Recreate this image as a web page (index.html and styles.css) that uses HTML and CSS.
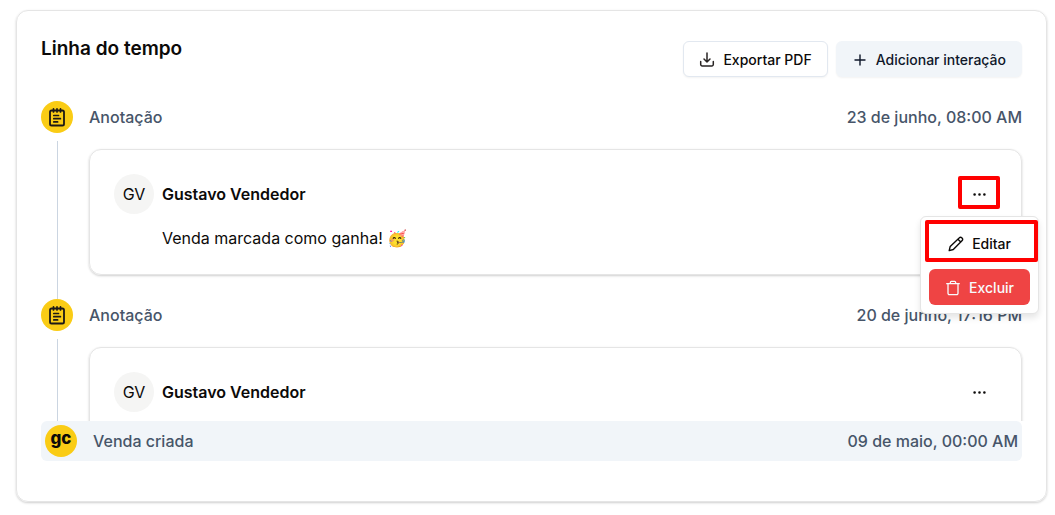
FILE: index.html
```html
<!DOCTYPE html>
<html lang="pt-BR">
<head>
<meta charset="utf-8">
<meta name="viewport" content="width=device-width, initial-scale=1">
<title>Linha do tempo</title>
<link rel="stylesheet" href="styles.css">
</head>
<body>
<svg class="sprite" aria-hidden="true">
  <symbol id="note" viewBox="0 0 20 20" fill="none" stroke="currentColor" stroke-width="1.8" stroke-linecap="round" stroke-linejoin="round">
    <rect x="3" y="3.5" width="14" height="15" rx="1.6"/>
    <path d="M6.5 1.8v3.2M10 1.8v3.2M13.500 1.800v3.200M6.800 8.500h4.700M6.800 11.700h6.600M6.800 14.900h3.800" stroke-width="1.7"/>
  </symbol>
  <symbol id="dots" viewBox="0 0 15 15">
    <path fill="currentColor" d="M3.900 7.500a1.300 1.300 0 1 1-2.600 0 1.300 1.300 0 0 1 2.600 0ZM8.800 7.500a1.300 1.300 0 1 1-2.600 0 1.300 1.300 0 0 1 2.600 0ZM13.700 7.500a1.300 1.300 0 1 1-2.600 0 1.300 1.300 0 0 1 2.600 0Z"/>
  </symbol>
</svg>
<main class="panel">
  <header class="panel-header">
    <h1 class="title">Linha do tempo</h1>
    <div class="actions">
      <button class="button outline" type="button">
        <svg class="icon" viewBox="0 0 16 16" fill="none" stroke="#292524" stroke-width="1.5" stroke-linecap="round" stroke-linejoin="round"><path d="M8 1v9M5 7l3 3 3-3M1.700 9.500v3a1.500 1.500 0 0 0 1.500 1.500h9.600a1.500 1.500 0 0 0 1.500-1.500v-3"/></svg>
        Exportar PDF
      </button>
      <button class="button secondary" type="button">
        <svg class="icon" viewBox="0 0 16 16" fill="none" stroke="currentColor" stroke-width="1.4" stroke-linecap="round"><path d="M3 8h10M8 3v10"/></svg>
        Adicionar interação
      </button>
    </div>
  </header>
  <ol class="timeline">
    <li class="entry">
      <div class="rail">
        <span class="badge"><svg class="note" aria-hidden="true"><use href="#note"/></svg></span>
        <span class="line"></span>
      </div>
      <div class="content">
        <div class="meta"><span>Anotação</span><time>23 de junho, 08:00 AM</time></div>
        <article class="card">
          <div class="author">
            <span class="avatar">GV</span>
            <strong class="name">Gustavo Vendedor</strong>
            <div class="menu-anchor">
              <button class="more marked" type="button" aria-label="Mais opções" aria-expanded="true"><svg class="dots"><use href="#dots"/></svg></button>
              <div class="menu">
                <button class="button ghost marked" type="button">
                  <svg class="icon" viewBox="0 0 16 16" fill="none" stroke="currentColor" stroke-width="1.400" stroke-linecap="round" stroke-linejoin="round"><path d="M1.200 14.600l1-4.200L11.400 1.700a1.600 1.600 0 0 1 2.300 0l.5.500a1.600 1.600 0 0 1 0 2.300L5.300 13.500zM9.900 3.200l2.900 2.900"/></svg>
                  Editar
                </button>
                <button class="button danger" type="button">
                  <svg class="icon" viewBox="0 0 16 16" fill="none" stroke="currentColor" stroke-width="1.300" stroke-linecap="round" stroke-linejoin="round"><path d="M1.700 3.700h12.600M5.400 3.700v-1.400a1 1 0 0 1 1-1h3.200a1 1 0 0 1 1 1v1.400M3 3.700v9.600a1.300 1.300 0 0 0 1.300 1.300h7.400a1.300 1.300 0 0 0 1.300-1.300V3.700"/></svg>
                  Excluir
                </button>
              </div>
            </div>
          </div>
          <p class="message">Venda marcada como ganha! 🥳</p>
        </article>
      </div>
    </li>
    <li class="entry">
      <div class="rail">
        <span class="badge"><svg class="note" aria-hidden="true"><use href="#note"/></svg></span>
        <span class="line"></span>
      </div>
      <div class="content">
        <div class="meta"><span>Anotação</span><time>20 de junho, 17:16 PM</time></div>
        <article class="card">
          <div class="author">
            <span class="avatar">GV</span>
            <strong class="name">Gustavo Vendedor</strong>
            <button class="more" type="button" aria-label="Mais opções"><svg class="dots"><use href="#dots"/></svg></button>
          </div>
        </article>
      </div>
    </li>
  </ol>
  <footer class="created">
    <span class="badge brand">gc</span>
    <div class="meta"><span>Venda criada</span><time>09 de maio, 00:00 AM</time></div>
  </footer>
</main>
</body>
</html>
```
FILE: styles.css
```css
* { box-sizing: border-box; }
body {
  margin: 0;
  padding: 10px 8px 12px 16px;
  background: #fff;
  color: #0c0a09;
  font: 16px/24px Inter, "Noto Color Emoji", sans-serif;
}
.sprite { position: absolute; width: 0; height: 0; }
.panel {
  padding: 24px 24px 40px;
  border: 1px solid #e5e5e5;
  border-radius: 12px;
  box-shadow: 0 1px 3px rgb(0 0 0 / 10%), 0 1px 2px rgb(0 0 0 / 10%);
}
.panel-header { display: flex; justify-content: space-between; align-items: flex-start; }
.title { margin: 0; font-size: 19px; line-height: 28px; font-weight: 600; }
.actions { display: flex; gap: 8px; padding-top: 6px; }
.button {
  display: flex;
  align-items: center;
  justify-content: center;
  gap: 8px;
  height: 36px;
  padding: 1px 16px 0;
  border: 0;
  border-radius: 6px;
  background: #fff;
  color: #0c0a09;
  font: 500 14px/20px Inter, sans-serif;
  white-space: nowrap;
}
.icon { width: 16px; height: 16px; flex: none; }
.outline { padding: 1px 15px 0; border: 1px solid #e2e8f0; box-shadow: 0 1px 2px rgb(0 0 0 / 5%); }
.secondary { background: #f1f5f9; color: #0f172a; box-shadow: 0 1px 2px rgb(0 0 0 / 5%); }
.danger { background: #ef4444; color: #f8fafc; }
.timeline { height: 320px; margin: 24px 0 0; padding: 0; list-style: none; overflow-y: clip; overflow-x: visible; }
.entry { display: flex; gap: 16px; }
.rail { display: flex; flex-direction: column; gap: 8px; width: 32px; }
.badge {
  display: flex;
  align-items: center;
  justify-content: center;
  flex: none;
  width: 32px;
  height: 32px;
  border-radius: 50%;
  background: #facc15;
}
.note { width: 20px; height: 20px; color: #1c1917; }
.line { flex: 1; width: 1px; margin-left: 16px; background: #cbd5e1; }
.content { flex: 1; padding-bottom: 24px; }
.meta {
  display: flex;
  flex: 1;
  align-items: center;
  justify-content: space-between;
  height: 32px;
  color: #475569;
  font-weight: 500;
}
.card {
  margin-top: 16px;
  padding: 24px;
  border: 1px solid #e5e5e5;
  border-radius: 12px;
  box-shadow: 0 1px 3px rgb(0 0 0 / 10%), 0 1px 2px rgb(0 0 0 / 10%);
}
.author { display: flex; align-items: center; gap: 8px; }
.avatar {
  display: flex;
  align-items: center;
  justify-content: center;
  width: 40px;
  height: 40px;
  border-radius: 50%;
  background: #f5f5f4;
}
.name { flex: 1; font-weight: 600; }
.menu-anchor { position: relative; z-index: 5; }
.more {
  display: flex;
  align-items: center;
  justify-content: center;
  width: 36px;
  height: 36px;
  padding: 0;
  border: 0;
  background: transparent;
  color: #0c0a09;
}
.dots { width: 15px; height: 15px; }
.menu {
  position: absolute;
  top: 40px;
  right: -42px;
  display: flex;
  flex-direction: column;
  gap: 8px;
  padding: 8px;
  border: 1px solid #e5e5e5;
  border-radius: 6px;
  background: #fff;
  box-shadow: 0 4px 6px rgb(0 0 0 / 10%);
}
.marked { position: relative; }
.marked::after {
  content: "";
  position: absolute;
  border: 4px solid #f00;
  border-radius: 2px;
}
.more.marked::after { inset: 0 -3px 3px; }
.ghost.marked::after { inset: -5px -8px -1px -4px; }
.message { margin: 12px 0 0; padding-left: 48px; }
.created {
  display: flex;
  align-items: center;
  gap: 16px;
  padding: 4px;
  border-radius: 6px;
  background: #f1f5f9;
}
.brand { padding-bottom: 6px; color: #0c0a09; font-size: 17px; font-weight: 800; }
```
